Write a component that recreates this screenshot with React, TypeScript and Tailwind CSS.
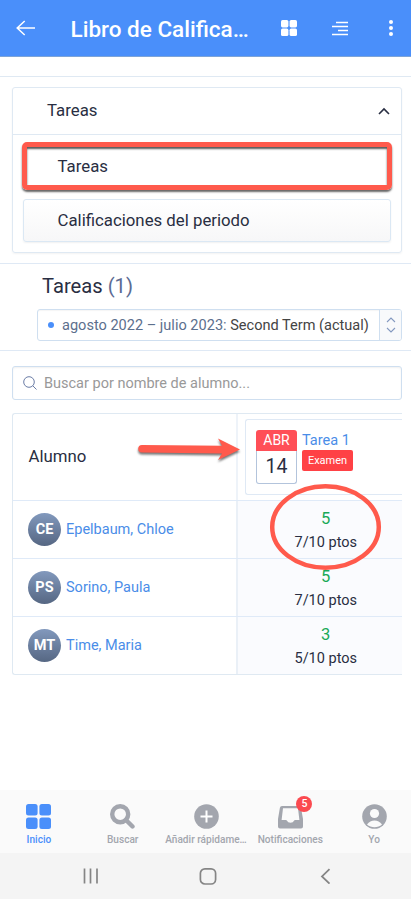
const students = [
  { initials: "CE", name: "Epelbaum, Chloe", grade: "5", points: "7/10 ptos" },
  { initials: "PS", name: "Sorino, Paula", grade: "5", points: "7/10 ptos" },
  { initials: "MT", name: "Time, Maria", grade: "3", points: "5/10 ptos" },
];

function GridIcon({ className }: { className: string }) {
  return (
    <svg viewBox="0 0 25 25" fill="currentColor" className={className}>
      <rect width="11.6" height="11.6" rx="2.5" />
      <rect x="13.4" width="11.6" height="11.6" rx="2.5" />
      <rect y="13.4" width="11.6" height="11.6" rx="2.5" />
      <rect x="13.4" y="13.4" width="11.6" height="11.6" rx="2.5" />
    </svg>
  );
}

function Header() {
  return (
    <header className="flex h-[57px] shrink-0 items-center border-b border-[#7da4d8] bg-[#4a8ffa] text-white">
      <svg viewBox="0 0 20 16" className="ml-4 h-4 w-5 shrink-0" fill="none" stroke="currentColor" strokeWidth="1.5">
        <path d="M8.7 1 1.2 8l7.5 7M1.2 8H19" />
      </svg>
      <h1 className="ml-[34.5px] w-[185.5px] pt-0.5 text-[22.5px] leading-7 font-medium whitespace-nowrap">
        Libro de Califica…
      </h1>
      <GridIcon className="ml-[25px] size-4 shrink-0" />
      <svg viewBox="0 0 16 15" className="ml-[35px] h-[15px] w-4 shrink-0" stroke="currentColor" strokeWidth="1.3">
        <path d="M4 1.500h12M0 5.500h16M6 9.500h10M0 13.500h16" />
      </svg>
      <svg viewBox="0 0 4 16" className="ml-[41px] h-4 w-1 shrink-0" fill="currentColor">
        <circle cx="2" cy="2" r="2" />
        <circle cx="2" cy="8" r="2" />
        <circle cx="2" cy="14" r="2" />
      </svg>
    </header>
  );
}

function SectionMenu() {
  return (
    <div className="mx-3 mr-[9px] mt-[10px] h-[166px] rounded-[3px] border border-[#dfe9f3] shadow-[0_1px_2px_rgba(0,0,0,0.05)]">
      <div className="flex h-[47px] items-center justify-between border-b border-[#dfe9f3] pr-[11px] pl-[34px] text-[16.8px]">
        <span>Tareas</span>
        <svg viewBox="0 0 12 8" className="h-2 w-3" fill="none" stroke="currentColor" strokeWidth="1.6">
          <path d="M1 7l5-5 5 5" />
        </svg>
      </div>
      <div className="px-[9px] pt-[7px] text-[16.8px]">
        <div className="flex h-[48px] items-center rounded-[5px] border-[5px] border-[#ff5a4c] pt-0.5 pl-[30.5px] shadow-[0_2px_2px_rgba(0,0,0,0.6),inset_0_2px_2px_rgba(0,0,0,0.65)]">
          Tareas
        </div>
        <div className="mx-px mt-[9px] flex h-[43px] items-center rounded-[3px] border border-[#dbe8f4] bg-linear-to-b from-white to-[#f7f7f8] pl-[33.5px] shadow-[0_1px_2px_rgba(0,0,0,0.06)]">
          Calificaciones del periodo
        </div>
      </div>
    </div>
  );
}

function TermPicker() {
  return (
    <section className="mt-[10px] h-[88px] shrink-0 border-y border-[#dfe9f5] pr-[9px] pl-[37px]">
      <h2 className="pt-2 pl-[5px] text-[20.2px] leading-7">
        Tareas <span className="text-[#5b6b93]">(1)</span>
      </h2>
      <div className="mt-[9px] flex h-8 items-stretch overflow-hidden rounded-[3px] border border-[#cfdff0] shadow-[inset_0_1px_1px_rgba(0,0,0,0.04)]">
        <div className="flex flex-1 items-center pl-[10px] text-[14.55px] whitespace-nowrap text-[#444]">
          <span className="mr-2 size-1.5 shrink-0 rounded-full bg-[#4a8ffa]" />
          <span className="pt-px">
            <span className="text-[#5c6f8d]">agosto 2022 – julio 2023:</span> Second Term (actual)
          </span>
        </div>
        <div className="flex w-[22px] items-center justify-center border-l border-[#cfdff0] bg-[#f8f9fb]">
          <svg viewBox="0 0 10 16" className="h-4 w-2.5" fill="none" stroke="#8499c0" strokeWidth="1.1">
            <path d="M1 5l4-4 4 4M1 11l4 4 4-4" />
          </svg>
        </div>
      </div>
    </section>
  );
}

function SearchBox() {
  return (
    <div className="mt-[15px] mr-[9px] ml-3 flex h-[34px] shrink-0 items-center rounded-[3px] border border-[#cfdff0] pl-[10px] text-[14.5px] text-[#999] shadow-[inset_0_1px_2px_rgba(0,0,0,0.06)]">
      <svg viewBox="0 0 14 14" className="mr-[7px] size-3.5" fill="none" stroke="#6b7da6" strokeWidth="1">
        <circle cx="6" cy="6" r="5.3" />
        <path d="M9.8 9.8l3.7 3.7" />
      </svg>
      <span className="pt-px">Buscar por nombre de alumno...</span>
    </div>
  );
}

function AssignmentCard() {
  return (
    <div className="ml-[7px] flex h-[76px] rounded-l-[3px] border border-r-0 border-[#dfe9f5] pt-[10px] pl-[10px]">
      <div className="h-[54px] w-[41px] text-center">
        <div className="h-[21px] rounded-t-[3px] bg-[#ff4f57] text-[14px] leading-[21px] text-white">ABR</div>
        <div className="h-[33px] rounded-b-[3px] border border-t-0 border-[#b3c4dc] text-[19.5px] leading-[31px]">14</div>
      </div>
      <div className="ml-[5px]">
        <div className="pt-px text-[14.5px] leading-[19px] text-[#4a8de8]">Tarea 1</div>
        <div className="h-[21px] w-[51px] rounded-[2px] bg-[#ff4145] text-center text-[11px] leading-[21px] text-white">
          Examen
        </div>
      </div>
    </div>
  );
}

function GradeTable() {
  return (
    <div className="relative mt-[13px] mr-[9px] ml-3 h-[262px] shrink-0">
      <div className="rounded-l-[3px] border border-r-0 border-[#dfe9f2]">
        <div className="flex h-[86px]">
          <div className="flex w-[225px] items-center border-r-2 border-[#eef3f9] pl-[15.5px] text-[16.8px]">
            Alumno
          </div>
          <div className="flex-1 pt-[5px]">
            <AssignmentCard />
          </div>
        </div>
        {students.map((s) => (
          <div key={s.name} className="flex h-[58px] border-t border-[#dfeaf8]">
            <div className="flex w-[225px] items-center border-r-2 border-[#eaf0f7] pl-[15px]">
              <div className="flex size-[33px] items-center justify-center rounded-full bg-linear-to-b from-[#8299bd] to-[#566783] text-[14.5px] font-bold text-white">
                {s.initials}
              </div>
              <span className="ml-[5px] text-[14.5px] text-[#4a8de8]">{s.name}</span>
            </div>
            <div className="flex-1 bg-[#fafbfe] pt-[6px] pl-[11.5px] text-center">
              <div className="text-[16.5px] leading-6 text-[#18a957]">{s.grade}</div>
              <div className="text-[14.5px] leading-[23px]">{s.points}</div>
            </div>
          </div>
        ))}
      </div>
      {/* Callout arrow and circle */}
      <svg
        viewBox="0 0 390 262"
        className="absolute inset-0 h-[262px] w-[390px] overflow-visible drop-shadow-[0_2px_1px_rgba(0,0,0,0.55)]"
        fill="#ff5a4c"
      >
        <path d="M130 32 L210 32.8 L206 25.500 L228 36.500 L206 47 L210 40.5 L130 39.6 A3.8 3.8 0 0 1 130 32Z" />
      </svg>
      <svg
        viewBox="0 0 390 262"
        className="absolute inset-0 h-[262px] w-[390px] overflow-visible"
        fill="none"
        stroke="#ff5a4c"
        strokeWidth="4.5"
      >
        <ellipse cx="313.5" cy="114" rx="53.3" ry="40.7" />
      </svg>
    </div>
  );
}

function BottomNav() {
  return (
    <nav className="mt-auto flex h-[63px] shrink-0 bg-[#fafafa] text-[10.1px] font-medium text-[#a3a6ae] [&>div]:flex [&>div]:w-[83.8px] [&>div]:shrink-0 [&>div]:flex-col [&>div]:items-center [&>div]:pt-[14px]">
      <div className="-ml-[3px] text-[#4a8ffa]">
        <GridIcon className="size-[25px]" />
        <span className="mt-[3px]">Inicio</span>
      </div>
      <div>
        <svg viewBox="0 0 25 25" className="size-[25px]" fill="none" stroke="currentColor" strokeWidth="4.4">
          <circle cx="10.2" cy="10.2" r="8" />
          <path d="M16 16l6.5 6.5" strokeLinecap="round" />
        </svg>
        <span className="mt-[3px]">Buscar</span>
      </div>
      <div>
        <svg viewBox="0 0 25 25" className="size-[25px]">
          <circle cx="12.5" cy="12.5" r="12.3" fill="currentColor" />
          <path d="M12.5 6.5v12M6.5 12.5h12" stroke="white" strokeWidth="2" />
        </svg>
        <span className="mt-[3px] -ml-px whitespace-nowrap">Añadir rápidame…</span>
      </div>
      <div className="relative">
        <svg viewBox="0 0 25 25" className="size-[25px]" fill="currentColor" fillRule="evenodd">
          <path d="M4 2h17q1.7 0 2 1.8L25 15v7.500q0 2-2 2H2q-2 0-2-2V15L1.900 3.800Q2.200 2 4 2ZM5 4.300 3.600 16h4.300q.8 0 1.100.8.800 2 3.500 2t3.500-2q.3-.8 1.100-.8h4.300L20 4.300Z" />
        </svg>
        <span className="mt-[3px]">Notificaciones</span>
        <span className="absolute top-[6px] left-[48px] flex size-4 items-center justify-center rounded-full bg-[#fb4a50] text-[10.5px] text-white">
          5
        </span>
      </div>
      <div>
        <svg viewBox="0 0 25 25" className="size-[25px]">
          <circle cx="12.5" cy="12.5" r="12.3" fill="currentColor" />
          <circle cx="12.500" cy="9.500" r="4.600" fill="#fafafa" />
          <path d="M5 20.500c2-2.600 4.500-4 7.500-4s5.500 1.400 7.500 4c-4 3.600-11 3.600-15 0Z" fill="#fafafa" />
        </svg>
        <span className="mt-[3px]">Yo</span>
      </div>
    </nav>
  );
}

function SystemBar() {
  return (
    <div className="flex h-[46px] shrink-0 items-center bg-[#f4f4f4] text-[#858585] [&>svg]:size-4">
      <svg viewBox="0 0 16 16" className="ml-[83px]" stroke="currentColor" strokeWidth="1.7">
        <path d="M1.500 .5v15M7.500 .5v15M14 .5v15" />
      </svg>
      <svg viewBox="0 0 16 16" className="ml-[101px] overflow-visible" fill="none" stroke="currentColor" strokeWidth="1.7">
        <rect x=".4" y=".8" width="15.200" height="15.200" rx="4.500" />
      </svg>
      <svg viewBox="0 0 16 16" className="ml-[101px]" fill="none" stroke="currentColor" strokeWidth="1.8">
        <path d="M12.500 1.200 5 8.400l7.500 7.200" />
      </svg>
    </div>
  );
}

export default function App() {
  return (
    <div className="flex h-[899px] w-[411px] flex-col overflow-hidden bg-white font-['Roboto',sans-serif] text-[#292e42]">
      <Header />
      <div className="h-5 shrink-0 border-b border-[#dfe9f3]" />
      <SectionMenu />
      <TermPicker />
      <SearchBox />
      <GradeTable />
      <BottomNav />
      <SystemBar />
    </div>
  );
}
